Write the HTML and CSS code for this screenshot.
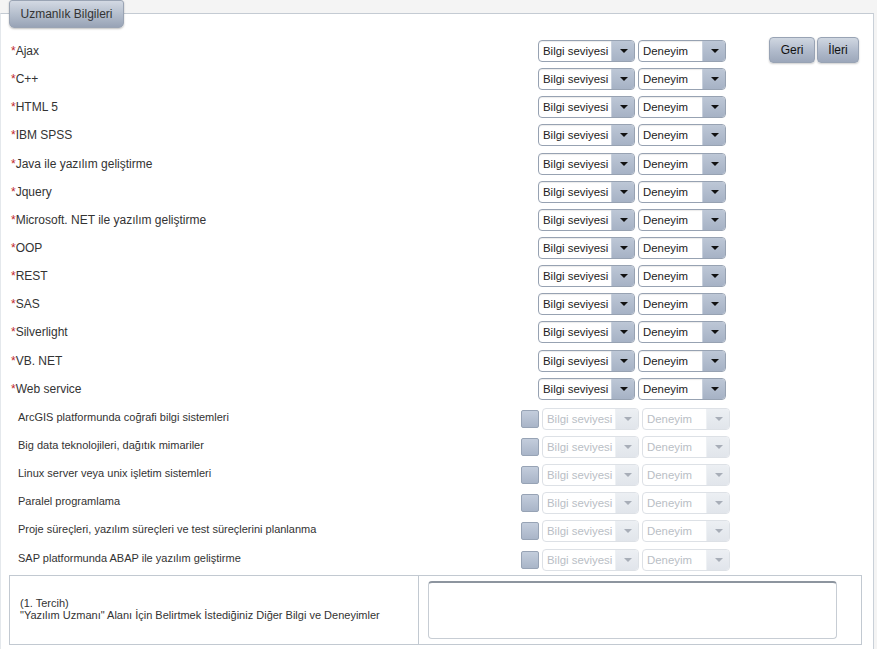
FILE: index.html
```html
<!DOCTYPE html>
<html lang="tr">
<head>
<meta charset="utf-8">
<title>Uzmanlık Bilgileri</title>
<link rel="stylesheet" href="styles.css">
</head>
<body>
<div class="panel">
  <div class="legend">Uzmanlık Bilgileri</div>
  <div class="body">
    <div class="main">
      <div class="rows">
        <div class="row"><span class="lbl"><span class="req">*</span>Ajax</span><span class="sel w1"><span class="txt">Bilgi seviyesi</span><span class="btn"></span></span><span class="sel w2"><span class="txt">Deneyim</span><span class="btn"></span></span></div>
        <div class="row"><span class="lbl"><span class="req">*</span>C++</span><span class="sel w1"><span class="txt">Bilgi seviyesi</span><span class="btn"></span></span><span class="sel w2"><span class="txt">Deneyim</span><span class="btn"></span></span></div>
        <div class="row"><span class="lbl"><span class="req">*</span>HTML 5</span><span class="sel w1"><span class="txt">Bilgi seviyesi</span><span class="btn"></span></span><span class="sel w2"><span class="txt">Deneyim</span><span class="btn"></span></span></div>
        <div class="row"><span class="lbl"><span class="req">*</span>IBM SPSS</span><span class="sel w1"><span class="txt">Bilgi seviyesi</span><span class="btn"></span></span><span class="sel w2"><span class="txt">Deneyim</span><span class="btn"></span></span></div>
        <div class="row"><span class="lbl"><span class="req">*</span>Java ile yazılım geliştirme</span><span class="sel w1"><span class="txt">Bilgi seviyesi</span><span class="btn"></span></span><span class="sel w2"><span class="txt">Deneyim</span><span class="btn"></span></span></div>
        <div class="row"><span class="lbl"><span class="req">*</span>Jquery</span><span class="sel w1"><span class="txt">Bilgi seviyesi</span><span class="btn"></span></span><span class="sel w2"><span class="txt">Deneyim</span><span class="btn"></span></span></div>
        <div class="row"><span class="lbl"><span class="req">*</span>Microsoft. NET ile yazılım geliştirme</span><span class="sel w1"><span class="txt">Bilgi seviyesi</span><span class="btn"></span></span><span class="sel w2"><span class="txt">Deneyim</span><span class="btn"></span></span></div>
        <div class="row"><span class="lbl"><span class="req">*</span>OOP</span><span class="sel w1"><span class="txt">Bilgi seviyesi</span><span class="btn"></span></span><span class="sel w2"><span class="txt">Deneyim</span><span class="btn"></span></span></div>
        <div class="row"><span class="lbl"><span class="req">*</span>REST</span><span class="sel w1"><span class="txt">Bilgi seviyesi</span><span class="btn"></span></span><span class="sel w2"><span class="txt">Deneyim</span><span class="btn"></span></span></div>
        <div class="row"><span class="lbl"><span class="req">*</span>SAS</span><span class="sel w1"><span class="txt">Bilgi seviyesi</span><span class="btn"></span></span><span class="sel w2"><span class="txt">Deneyim</span><span class="btn"></span></span></div>
        <div class="row"><span class="lbl"><span class="req">*</span>Silverlight</span><span class="sel w1"><span class="txt">Bilgi seviyesi</span><span class="btn"></span></span><span class="sel w2"><span class="txt">Deneyim</span><span class="btn"></span></span></div>
        <div class="row"><span class="lbl"><span class="req">*</span>VB. NET</span><span class="sel w1"><span class="txt">Bilgi seviyesi</span><span class="btn"></span></span><span class="sel w2"><span class="txt">Deneyim</span><span class="btn"></span></span></div>
        <div class="row"><span class="lbl"><span class="req">*</span>Web service</span><span class="sel w1"><span class="txt">Bilgi seviyesi</span><span class="btn"></span></span><span class="sel w2"><span class="txt">Deneyim</span><span class="btn"></span></span></div>

        <div class="row opt"><span class="lbl">ArcGIS platformunda coğrafi bilgi sistemleri</span><span class="chk"></span><span class="sel w1 dis"><span class="txt">Bilgi seviyesi</span><span class="btn"></span></span><span class="sel w3 dis"><span class="txt">Deneyim</span><span class="btn"></span></span></div>
        <div class="row opt"><span class="lbl">Big data teknolojileri, dağıtık mimariler</span><span class="chk"></span><span class="sel w1 dis"><span class="txt">Bilgi seviyesi</span><span class="btn"></span></span><span class="sel w3 dis"><span class="txt">Deneyim</span><span class="btn"></span></span></div>
        <div class="row opt"><span class="lbl">Linux server veya unix işletim sistemleri</span><span class="chk"></span><span class="sel w1 dis"><span class="txt">Bilgi seviyesi</span><span class="btn"></span></span><span class="sel w3 dis"><span class="txt">Deneyim</span><span class="btn"></span></span></div>
        <div class="row opt"><span class="lbl">Paralel programlama</span><span class="chk"></span><span class="sel w1 dis"><span class="txt">Bilgi seviyesi</span><span class="btn"></span></span><span class="sel w3 dis"><span class="txt">Deneyim</span><span class="btn"></span></span></div>
        <div class="row opt"><span class="lbl">Proje süreçleri, yazılım süreçleri ve test süreçlerini planlanma</span><span class="chk"></span><span class="sel w1 dis"><span class="txt">Bilgi seviyesi</span><span class="btn"></span></span><span class="sel w3 dis"><span class="txt">Deneyim</span><span class="btn"></span></span></div>
        <div class="row opt"><span class="lbl">SAP platformunda ABAP ile yazılım geliştirme</span><span class="chk"></span><span class="sel w1 dis"><span class="txt">Bilgi seviyesi</span><span class="btn"></span></span><span class="sel w3 dis"><span class="txt">Deneyim</span><span class="btn"></span></span></div>
      </div>
      <div class="actions">
        <span class="button b-geri">Geri</span>
        <span class="button b-ileri">İleri</span>
      </div>
    </div>
    <div class="other">
      <div class="other-label">(1. Tercih)<br>"Yazılım Uzmanı" Alanı İçin Belirtmek İstediğiniz Diğer Bilgi ve Deneyimler</div>
      <div class="other-field"><div class="area"></div></div>
    </div>
  </div>
</div>
</body>
</html>
```

FILE: styles.css
```css
html, body {
  margin: 0;
  padding: 0;
}
body {
  background: #f4f4f4;
  font-family: "Liberation Sans", Arial, sans-serif;
  color: #333;
  width: 877px;
  height: 649px;
  overflow: hidden;
}
.panel {
  position: relative;
  margin-top: 13px;
  width: 872px;
  height: 640px;
  background: #fff;
  border-top: 1px solid #c4cbd3;
  border-right: 1px solid #c9d0d8;
  border-left: 1px solid #e4e8ec;
}
.legend {
  position: absolute;
  left: 8px;
  top: -14px;
  width: 115px;
  height: 28px;
  box-sizing: border-box;
  border-radius: 3px 3px 5px 5px;
  background: linear-gradient(#d3d9e3, #b2bccb 55%, #98a3b6);
  border: 1px solid #9aa4b4;
  box-shadow: 0 1px 2px rgba(0,0,0,0.25);
  font-size: 12px;
  color: #333;
  line-height: 26px;
  text-align: center;
}
.body {
  padding-top: 23px;
}
.main {
  display: flex;
}
.rows {
  width: 760px;
}
.row {
  display: flex;
  align-items: center;
  height: 28.15px;
  font-size: 12px;
}
.lbl {
  width: 527px;
  padding-left: 10px;
  flex: none;
}
.req {
  color: #c0272d;
}
.opt .lbl {
  font-size: 11px;
  padding-left: 17px;
  width: 503px;
}
.chk {
  width: 16px;
  height: 16px;
  margin-right: 3px;
  border: 1px solid #97a3b5;
  border-radius: 2px;
  background: linear-gradient(#c3cddc, #a9b5c8);
  flex: none;
  position: relative;
  top: 2px;
}
.sel {
  display: flex;
  height: 22px;
  box-sizing: border-box;
  border: 1px solid #97a2b2;
  border-radius: 4px;
  background: #fff;
  overflow: hidden;
  margin-right: 3px;
  flex: none;
  box-shadow: inset 0 1px 1px rgba(0,0,0,0.08);
}
.w1 { width: 97px; }
.w2 { width: 88px; }
.w3 { width: 88px; }
.sel .txt {
  flex: 1;
  padding-left: 4px;
  line-height: 20px;
  font-size: 11.4px;
  color: #222;
  white-space: nowrap;
}
.sel .btn {
  width: 22px;
  background: linear-gradient(#bdc7d6, #a6b2c5);
  position: relative;
  border-left: 1px solid #c8d0dc;
}
.sel .btn::after {
  content: "";
  position: absolute;
  left: 8px;
  top: 8px;
  border-left: 4px solid transparent;
  border-right: 4px solid transparent;
  border-top: 4px solid #111;
}
.sel.dis {
  border-color: #dde1e6;
  box-shadow: none;
  position: relative;
  top: 2px;
}
.sel.dis .txt {
  color: #b9bec5;
}
.sel.dis .btn {
  background: linear-gradient(#eceff3, #e1e5eb);
  border-left-color: #eef1f4;
}
.sel.dis .btn::after {
  border-top-color: #a8aeb8;
}
.actions {
  display: flex;
  gap: 2px;
  margin-left: 8px;
  align-items: flex-start;
}
.button {
  display: block;
  height: 26px;
  box-sizing: border-box;
  border: 1px solid #98a3b4;
  border-radius: 4px;
  background: linear-gradient(#d0d7e1, #b0bacb 55%, #9ca7ba);
  box-shadow: 0 1px 2px rgba(0,0,0,0.2);
  font-size: 12px;
  color: #111;
  line-height: 24px;
  text-align: center;
}
.b-geri { width: 46px; }
.b-ileri { width: 42px; }
.other {
  display: flex;
  margin-left: 8px;
  margin-top: 3px;
  width: 853px;
  height: 70px;
  box-sizing: border-box;
  border: 1px solid #c2c9d1;
}
.other-label {
  width: 409px;
  box-sizing: border-box;
  border-right: 1px solid #c2c9d1;
  padding: 21px 0 0 10px;
  font-size: 11px;
  line-height: 12px;
  color: #333;
}
.other-field {
  padding: 5px 0 0 9px;
}
.area {
  width: 409px;
  height: 58px;
  box-sizing: border-box;
  border: 1px solid #c7cdd4;
  border-top: 2px solid #8d959f;
  border-radius: 4px;
  background: #fff;
}
```
